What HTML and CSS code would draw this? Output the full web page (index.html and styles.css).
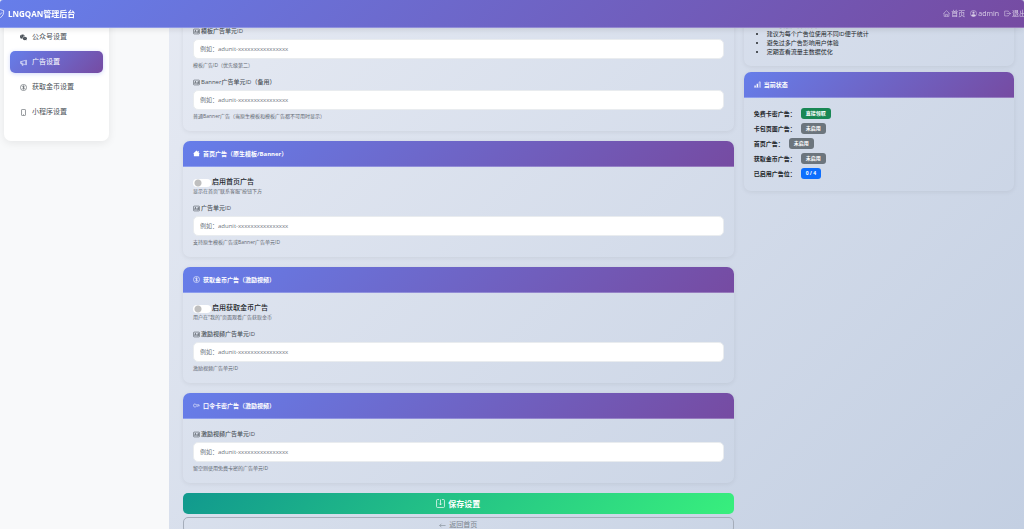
FILE: index.html
```html
<!DOCTYPE html>
<html lang="zh-CN">
<head>
<meta charset="utf-8">
<title>LNGQAN管理后台</title>
<link rel="stylesheet" href="styles.css">
</head>
<body>
<svg class="sprite" aria-hidden="true">
  <symbol id="shield" viewBox="0 0 16 16"><path d="M8 1C6.500 1.800 4.500 2.400 2.500 2.800C2 8 3.500 12.500 8 15C12.500 12.500 14 8 13.500 2.800C11.500 2.400 9.500 1.800 8 1ZM5.500 7.500L7.500 9.500L10.800 6"/></symbol>
  <symbol id="house" viewBox="0 0 16 16"><path d="M1 8L8 1.500L15 8M2.500 7V14.500H13.500V7M6 14.500V10H10V14.500"/></symbol>
  <symbol id="person" viewBox="0 0 16 16"><circle cx="8" cy="8" r="7"/><circle class="solid" cx="8" cy="6" r="2.500"/><path class="solid" d="M3 12.500C4.500 9 11.500 9 13 12.500C10.500 15.500 5.500 15.500 3 12.500Z"/></symbol>
  <symbol id="exit" viewBox="0 0 16 16"><path d="M10 4.500V2.500H1.500V13.500H10V11.500M6 8H15M12 5L15 8L12 11"/></symbol>
  <symbol id="wechat" viewBox="0 0 16 16"><path class="solid" fill-rule="evenodd" d="M11 5C10.500 2.700 8.300 1.200 5.700 1.200C2.500 1.200 0 3.300 0 6C0 7.500 .8 8.800 2 9.700L1.500 11.300L3.500 10.300C4.200 10.500 5 10.700 5.700 10.700C5.300 7.500 7.800 5 11 5ZM3 4.500A.8 .8 0 1 0 4.600 4.500A.8 .8 0 1 0 3 4.500ZM6.800 4.500A.8 .8 0 1 0 8.400 4.500A.8 .8 0 1 0 6.800 4.500Z"/><path class="solid" fill-rule="evenodd" d="M16 10C16 7.700 13.800 6 11.200 6C8.600 6 6.500 7.700 6.500 10C6.500 12.300 8.600 14 11.200 14C11.900 14 12.500 13.900 13 13.700L14.700 14.600L14.300 13.100C15.300 12.400 16 11.300 16 10ZM9 9A.6 .6 0 1 0 10.200 9A.6 .6 0 1 0 9 9ZM12.200 9A.6 .6 0 1 0 13.400 9A.6 .6 0 1 0 12.200 9Z"/></symbol>
  <symbol id="megaphone" viewBox="0 0 16 16"><path d="M1 6V10L4 10.500L13 13V3L4 5.500ZM4 5.500V10.500L5 14.500H7L6 11M15 2V14"/></symbol>
  <symbol id="coin" viewBox="0 0 16 16"><circle cx="8" cy="8" r="7"/><path d="M10.500 6C10 4.300 5.800 4.300 5.800 6.200C5.800 8.200 10.500 7.500 10.500 9.800C10.500 11.800 5.800 11.700 5.500 9.800M8 3.500V12.500"/></symbol>
  <symbol id="phone" viewBox="0 0 16 16"><rect x="3.500" y="1" width="9" height="14" rx="1.500"/><path d="M7 13H9"/></symbol>
  <symbol id="ad" viewBox="0 0 16 16"><rect x="1" y="2.500" width="14" height="11" rx="2"/><path d="M3.500 11L5.500 5L7.500 11M4.200 9H6.800M12.500 4.500V11M12.500 8.500C12 6.500 9.200 6.500 9.200 9C9.200 11.500 12 11.500 12.500 9.500"/></symbol>
  <symbol id="home-fill" viewBox="0 0 16 16"><path class="solid" d="M8 1L15.500 8L14 8.500V14.500H2V8.500L.5 8L8 1ZM11.500 2H13.500V5L11.500 3.500Z"/></symbol>
  <symbol id="key" viewBox="0 0 16 16"><path d="M7.500 6.500H14L15.500 8L14 9.500L12.500 8.500L11 9.500H7.500C6.500 12 1 12.500 1 8C1 3.500 6.500 4 7.500 6.500ZM4 7.900V8.100"/></symbol>
  <symbol id="bars" viewBox="0 0 16 16"><path class="solid" d="M0 15H16V14H0ZM1 10H4V14H1ZM6 6.500H9V14H6Z"/><path d="M11.700 14V2H14.300V14"/></symbol>
  <symbol id="save" viewBox="0 0 16 16"><path d="M5.500 1H2.500Q1 1 1 2.500V13.500Q1 15 2.500 15H13.500Q15 15 15 13.500V2.500Q15 1 13.500 1H10.500M8 1V10.500M5.500 8L8 10.500L10.500 8"/></symbol>
  <symbol id="back" viewBox="0 0 16 16"><path d="M15 8H1.500M5.500 4L1.500 8L5.500 12"/></symbol>
</svg>

<header class="navbar">
  <div class="navbar-inner">
    <a class="brand" href="#"><svg class="icon icon-lg"><use href="#shield"/></svg>LNGQAN管理后台</a>
    <nav class="nav-links">
      <a href="#"><svg class="icon"><use href="#house"/></svg>首页</a>
      <a href="#"><svg class="icon"><use href="#person"/></svg>admin</a>
      <a href="#"><svg class="icon"><use href="#exit"/></svg>退出</a>
    </nav>
  </div>
</header>

<div class="layout">
  <aside class="sidebar">
    <nav class="menu">
      <a href="#"><svg class="icon"><use href="#wechat"/></svg>公众号设置</a>
      <a class="active" href="#"><svg class="icon"><use href="#megaphone"/></svg>广告设置</a>
      <a href="#"><svg class="icon"><use href="#coin"/></svg>获取金币设置</a>
      <a href="#"><svg class="icon"><use href="#phone"/></svg>小程序设置</a>
    </nav>
  </aside>

  <main class="content">
    <form class="settings">
      <section class="card card-continued">
        <div class="card-body">
          <div class="field">
            <label for="tpl"><svg class="icon"><use href="#ad"/></svg>模板广告单元ID</label>
            <input id="tpl" type="text" placeholder="例如：adunit-xxxxxxxxxxxxxxxx">
            <p class="help">模板广告ID（优先级第二）</p>
          </div>
          <div class="field">
            <label for="banner"><svg class="icon"><use href="#ad"/></svg>Banner广告单元ID（备用）</label>
            <input id="banner" type="text" placeholder="例如：adunit-xxxxxxxxxxxxxxxx">
            <p class="help">普通Banner广告（当原生模板和模板广告都不可用时显示）</p>
          </div>
        </div>
      </section>

      <section class="card">
        <h2 class="card-header"><svg class="icon"><use href="#home-fill"/></svg>首页广告（原生模板/Banner）</h2>
        <div class="card-body">
          <div class="toggle-group">
            <div class="toggle"><input id="home-on" type="checkbox"><label for="home-on">启用首页广告</label></div>
            <p class="help">显示在首页"联系客服"按钮下方</p>
          </div>
          <div class="field">
            <label for="home-id"><svg class="icon"><use href="#ad"/></svg>广告单元ID</label>
            <input id="home-id" type="text" placeholder="例如：adunit-xxxxxxxxxxxxxxxx">
            <p class="help">支持原生模板广告或Banner广告单元ID</p>
          </div>
        </div>
      </section>

      <section class="card">
        <h2 class="card-header"><svg class="icon"><use href="#coin"/></svg>获取金币广告（激励视频）</h2>
        <div class="card-body">
          <div class="toggle-group">
            <div class="toggle"><input id="coin-on" type="checkbox"><label for="coin-on">启用获取金币广告</label></div>
            <p class="help">用户在"我的"页面观看广告获取金币</p>
          </div>
          <div class="field">
            <label for="coin-id"><svg class="icon"><use href="#ad"/></svg>激励视频广告单元ID</label>
            <input id="coin-id" type="text" placeholder="例如：adunit-xxxxxxxxxxxxxxxx">
            <p class="help">激励视频广告单元ID</p>
          </div>
        </div>
      </section>

      <section class="card">
        <h2 class="card-header"><svg class="icon"><use href="#key"/></svg>口令卡密广告（激励视频）</h2>
        <div class="card-body">
          <div class="field">
            <label for="key-id"><svg class="icon"><use href="#ad"/></svg>激励视频广告单元ID</label>
            <input id="key-id" type="text" placeholder="例如：adunit-xxxxxxxxxxxxxxxx">
            <p class="help">留空则使用免费卡密的广告单元ID</p>
          </div>
        </div>
      </section>

      <div class="actions">
        <button class="btn btn-save" type="submit"><svg class="icon icon-lg"><use href="#save"/></svg>保存设置</button>
        <a class="btn btn-back" href="#"><svg class="icon"><use href="#back"/></svg>返回首页</a>
      </div>
    </form>

    <div class="side">
      <section class="card card-tips">
        <ul class="tips">
          <li>原生模板广告效果优于Banner</li>
          <li>建议为每个广告位使用不同ID便于统计</li>
          <li>避免过多广告影响用户体验</li>
          <li>定期查看流量主数据优化</li>
        </ul>
      </section>
      <section class="card">
        <h2 class="card-header"><svg class="icon"><use href="#bars"/></svg>当前状态</h2>
        <ul class="status">
          <li>免费卡密广告：<span class="badge badge-on">直接领取</span></li>
          <li>卡包页面广告：<span class="badge">未启用</span></li>
          <li>首页广告：<span class="badge">未启用</span></li>
          <li>获取金币广告：<span class="badge">未启用</span></li>
          <li>已启用广告位：<span class="badge badge-count">0 / 4</span></li>
        </ul>
      </section>
    </div>
  </main>
</div>
</body>
</html>
```

FILE: styles.css
```css
* { box-sizing: border-box; }

body {
  margin: 0;
  height: 100vh;
  overflow: hidden;
  background: #f8f9fa;
  color: #212529;
  font-family: "Open Sans", "Noto Sans CJK SC", sans-serif;
  font-size: 7px;
  line-height: 10px;
}

a { color: inherit; text-decoration: none; }
p, h2, ul { margin: 0; padding: 0; }

.sprite { display: none; }

.icon {
  flex: none;
  width: 7px;
  height: 7px;
  fill: none;
  stroke: currentColor;
  stroke-width: 1.3;
}
.icon-lg { width: 9px; height: 9px; }
.solid { fill: currentColor; stroke: none; }

.navbar {
  position: fixed;
  inset: 0 0 auto;
  z-index: 10;
  background: linear-gradient(135deg, #667eea, #764ba2);
  border-bottom: 1px solid rgba(255, 255, 255, 0.25);
  border-radius: 3px 3px 0 0;
  box-shadow: 0 1px 6px rgba(0, 0, 0, 0.12);
}
.navbar-inner {
  display: flex;
  align-items: center;
  justify-content: space-between;
  height: 27px;
  margin: 0 -2px 0 -4px;
}
.brand {
  display: flex;
  align-items: center;
  gap: 3px;
  color: #fff;
  font-size: 8px;
  font-weight: 700;
}
.nav-links { display: flex; gap: 5px; color: rgba(255, 255, 255, 0.7); }
.nav-links a { display: flex; align-items: center; gap: 1px; }

.layout { display: flex; height: 100%; }

.sidebar { flex: none; width: 169px; padding: 0 60px 0 4px; }
.menu {
  display: flex;
  flex-direction: column;
  gap: 3px;
  padding: 26px 6px 18px;
  background: #fff;
  border-radius: 0 0 7px 7px;
  box-shadow: 0 2px 8px rgba(0, 0, 0, 0.08);
  color: #495057;
}
.menu a {
  display: flex;
  align-items: center;
  gap: 5px;
  height: 22px;
  padding: 0 10px;
  border-radius: 5px;
}
.menu .active {
  background: linear-gradient(135deg, #667eea, #764ba2);
  box-shadow: 0 1px 4px rgba(102, 126, 234, 0.3);
  color: #fff;
}

.content {
  flex: 1;
  display: grid;
  grid-template-columns: repeat(12, 1fr);
  align-items: start;
  column-gap: 10px;
  padding: 0 10px 0 14px;
  background: linear-gradient(135deg, #e6eaf3, #c3cfe2);
}
.settings { grid-column: span 8; display: grid; gap: 10px; }
.side { grid-column: span 4; display: grid; gap: 6px; }

.card {
  border-radius: 7px;
  box-shadow: 0 1px 5px rgba(0, 0, 0, 0.07);
}
.card-header {
  display: flex;
  align-items: center;
  gap: 3px;
  height: 26px;
  padding: 0 10px;
  background: linear-gradient(135deg, #667eea, #764ba2);
  border-bottom: 1px solid rgba(255, 255, 255, 0.25);
  border-radius: 7px 7px 0 0;
  color: #fff;
  font-size: 6px;
  font-weight: 700;
}
.card-body { display: grid; gap: 7px; padding: 10px; }
.card-continued .card-body { padding-top: 26px; }

.field label {
  display: flex;
  align-items: center;
  gap: 1px;
  margin-bottom: 3px;
  color: #495057;
  font-size: 6px;
  font-weight: 500;
}
.field input {
  display: block;
  width: 100%;
  height: 20px;
  padding: 0 6px;
  border: 1px solid #e9ecef;
  border-radius: 5px;
  background: #fff;
  color: #212529;
  font: inherit;
  font-size: 6px;
}
.field input::placeholder { color: #6c757d; }
.help { color: #5f6871; font-size: 5px; line-height: 9px; }
.field .help { margin-top: 2px; }

.toggle { display: flex; align-items: center; height: 10px; font-weight: 500; }
.toggle input {
  appearance: none;
  width: 18px;
  height: 8px;
  margin: 2px 1px 0 0;
  border-radius: 4px;
  background: radial-gradient(circle at 5px 4px, #bfbfbf 3px, #fff 4px);
}

.actions { display: grid; gap: 3px; }
.btn {
  display: flex;
  align-items: center;
  justify-content: center;
  gap: 3px;
  width: 100%;
  border: 0;
  border-radius: 5px;
  font-family: inherit;
}
.btn-save {
  height: 21px;
  background: linear-gradient(135deg, #11998e, #38ef7d);
  color: #fff;
  font-size: 8px;
  font-weight: 700;
}
.btn-back {
  height: 16px;
  border: 1px solid #a5adba;
  color: #7b848e;
}

.card-tips { padding: 21px 10px 9px; }
.tips { padding-left: 13px; font-size: 6px; line-height: 9px; }

.status {
  display: grid;
  gap: 4px;
  padding: 10px 10px 12px;
  list-style: none;
  font-size: 6px;
  font-weight: 600;
}
.status li { display: flex; align-items: center; gap: 5px; height: 11px; }
.badge {
  padding: 0 5px;
  border-radius: 3px;
  background: #6c757d;
  color: #fff;
  font-size: 5px;
  font-weight: 700;
  line-height: 11px;
}
.badge-on { background: #198754; }
.badge-count { background: #0d6efd; }
```
